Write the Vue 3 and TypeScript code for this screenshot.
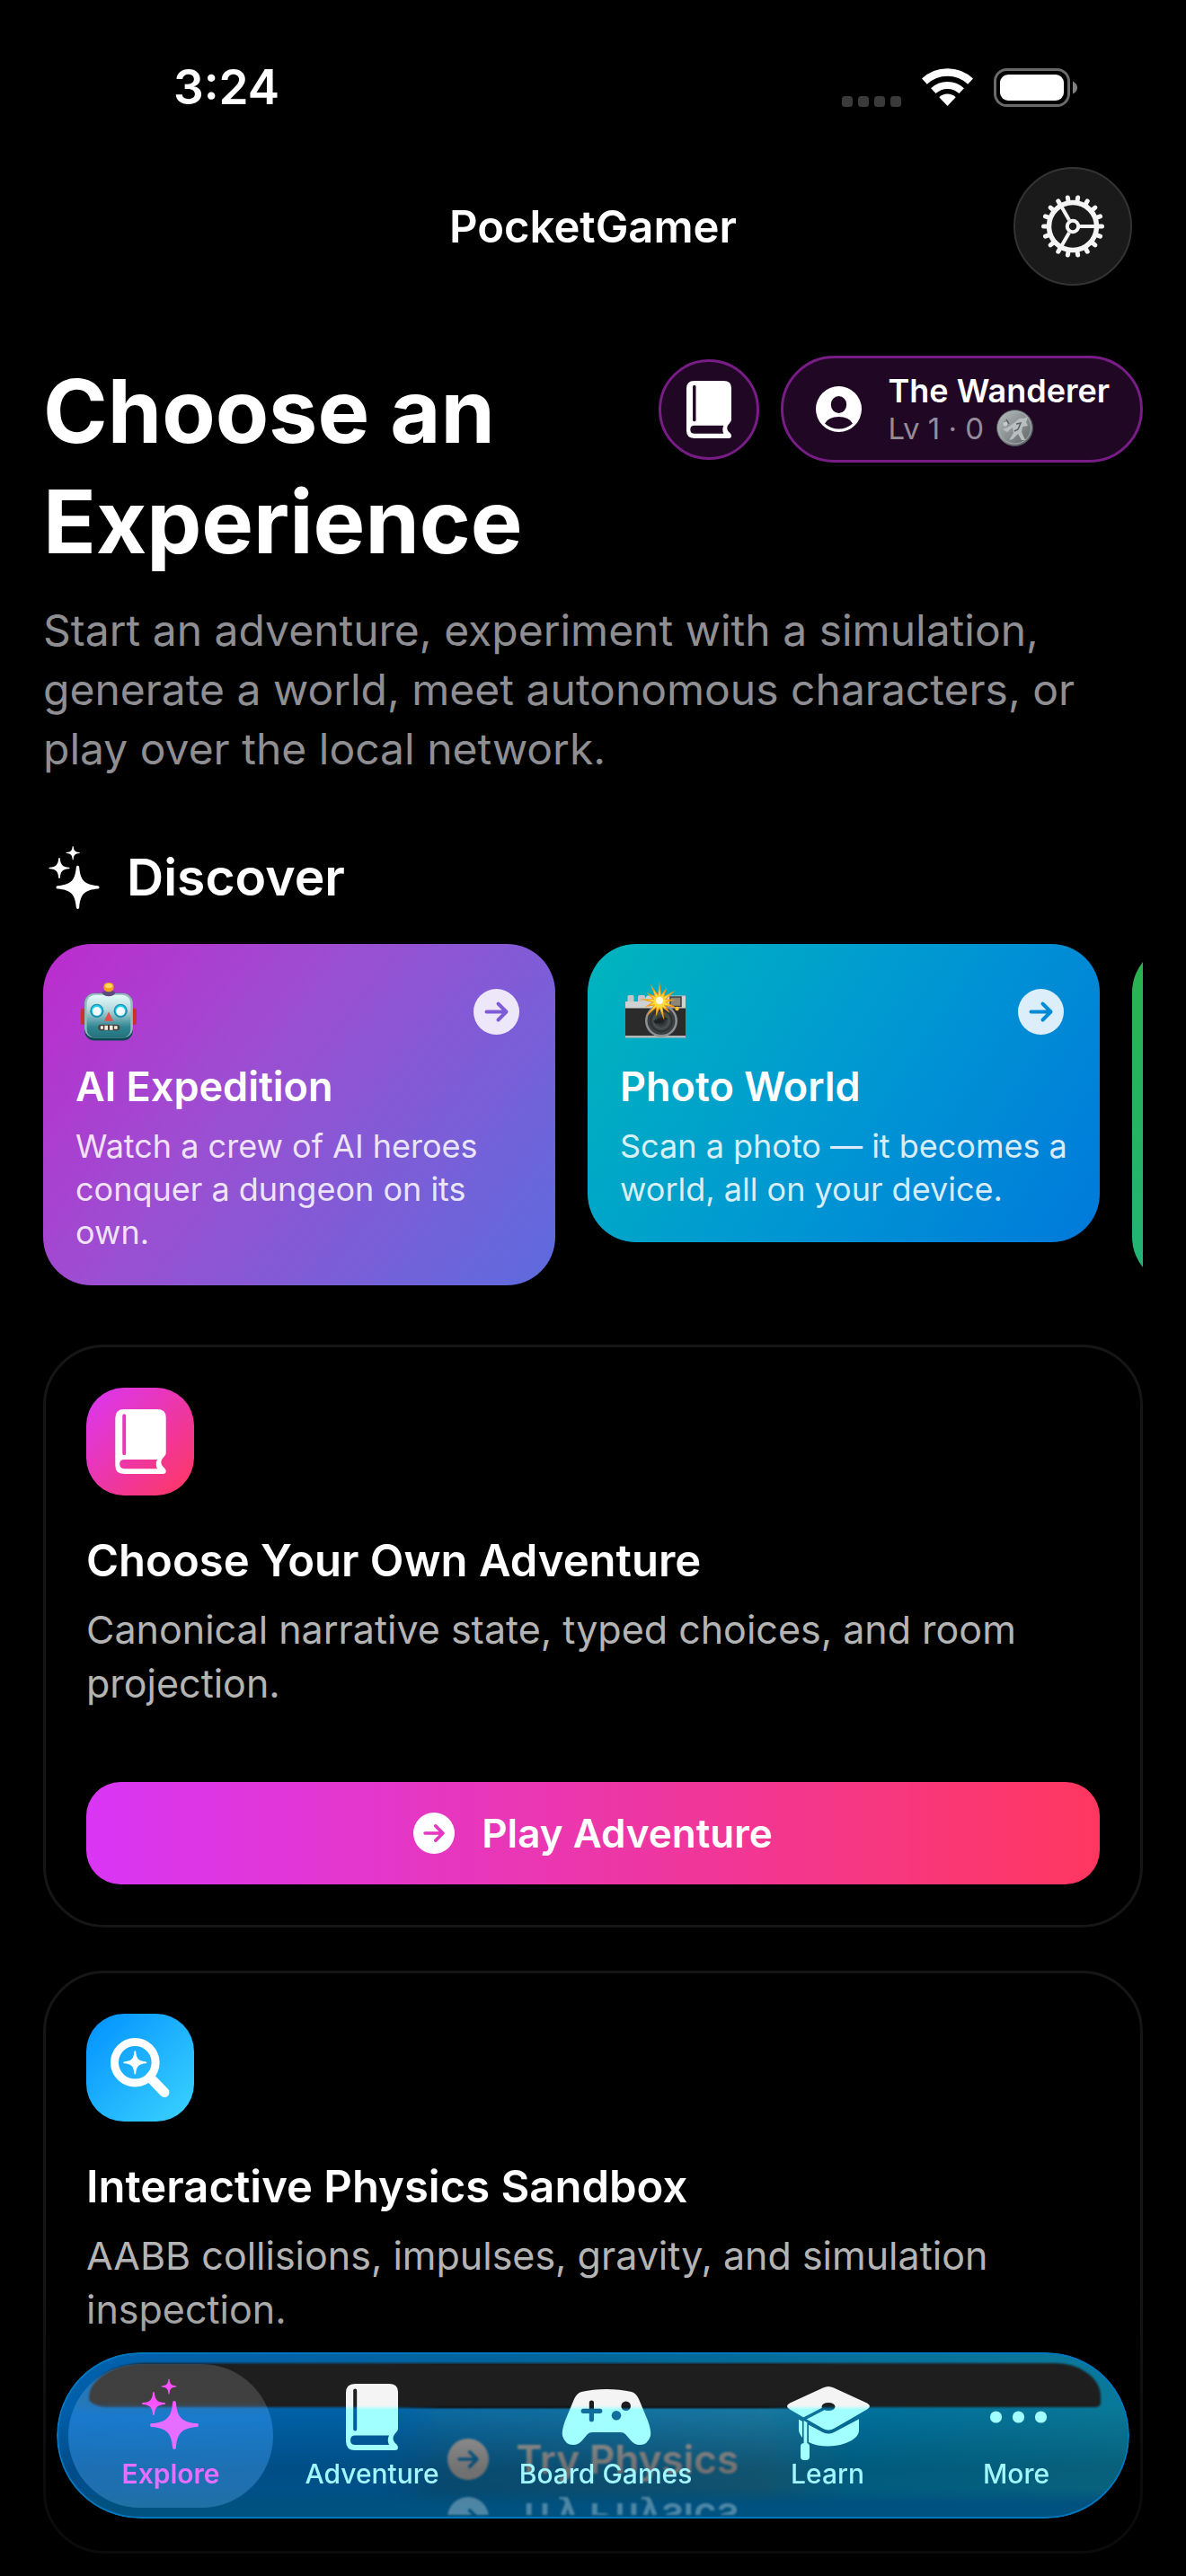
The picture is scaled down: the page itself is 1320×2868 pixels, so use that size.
<script setup lang="ts">
interface Discovery {
  id: string
  title: string
  text: string
  art: string
}

interface Experience {
  id: string
  title: string
  text: string
  action: string
  icon: string
}

interface Tab {
  id: string
  label: string
}

const discoveries: Discovery[] = [
  { id: 'expedition', title: 'AI Expedition', text: 'Watch a crew of AI heroes conquer a dungeon on its own.', art: 'robot' },
  { id: 'photo', title: 'Photo World', text: 'Scan a photo — it becomes a world, all on your device.', art: 'camera' },
]

const experiences: Experience[] = [
  {
    id: 'adventure',
    title: 'Choose Your Own Adventure',
    text: 'Canonical narrative state, typed choices, and room projection.',
    action: 'Play Adventure',
    icon: 'book',
  },
  {
    id: 'physics',
    title: 'Interactive Physics Sandbox',
    text: 'AABB collisions, impulses, gravity, and simulation inspection.',
    action: 'Try Physics',
    icon: 'magnifier',
  },
]

const tabs: Tab[] = [
  { id: 'explore', label: 'Explore' },
  { id: 'adventure', label: 'Adventure' },
  { id: 'games', label: 'Board Games' },
  { id: 'learn', label: 'Learn' },
  { id: 'more', label: 'More' },
]

// Four-pointed star with slightly rounded tips
function star(cx: number, cy: number, r: number): string {
  const t = r * 0.07
  const e = r - t
  const a = r * 0.12
  const b = r * 0.32
  return [
    `M${cx - t} ${cy - e}`,
    `A${t} ${t} 0 0 1 ${cx + t} ${cy - e}`,
    `C${cx + a} ${cy - b} ${cx + b} ${cy - a} ${cx + e} ${cy - t}`,
    `A${t} ${t} 0 0 1 ${cx + e} ${cy + t}`,
    `C${cx + b} ${cy + a} ${cx + a} ${cy + b} ${cx + t} ${cy + e}`,
    `A${t} ${t} 0 0 1 ${cx - t} ${cy + e}`,
    `C${cx - a} ${cy + b} ${cx - b} ${cy + a} ${cx - e} ${cy + t}`,
    `A${t} ${t} 0 0 1 ${cx - e} ${cy - t}`,
    `C${cx - b} ${cy - a} ${cx - a} ${cy - b} ${cx - t} ${cy - e}Z`,
  ].join('')
}

function burst(cx: number, cy: number, outer: number, inner: number, points: number): string {
  const out: string[] = []
  for (let i = 0; i < points * 2; i++) {
    const r = i % 2 ? inner : outer * (i % 4 ? 0.8 : 1)
    const angle = (Math.PI * i) / points - Math.PI / 2
    out.push(`${(cx + r * Math.cos(angle)).toFixed(1)},${(cy + r * Math.sin(angle)).toFixed(1)}`)
  }
  return out.join(' ')
}

const sparkles = star(54, 60, 27) + star(31, 36, 13) + star(48, 17, 8.5)
const teeth = Array.from({ length: 18 }, (_, i) => i * 20)

const bookPath =
  'M10 0H48Q58 0 58 9V50Q58 52 56 54Q52.5 57.5 52.5 60.5Q52.5 64.5 56.5 67.5Q58 69 58 71Q58 74 54.5 74H10Q0 74 0 64V10Q0 0 10 0Z' +
  'M8.2 7.5V50.5A2 2 0 0 0 12.2 50.5V7.5A2 2 0 0 0 8.2 7.5Z' +
  'M10.5 57.5Q5 57.5 5 62.7Q5 68 10.5 68H48Q45.5 62.7 48 57.5Z'

const padPath =
  'M22 3Q35 0 50 0Q65 0 78 3Q83 4.5 86 11L96 35Q100 46 99 52Q96 62 87 62Q81 62 77 57L71 50Q69 48 66 48H34Q31 48 29 50L23 57Q19 62 13 62Q4 62 1 52Q0 46 4 35L14 11Q17 4.5 22 3Z'
</script>

<template>
  <div class="app">
    <svg class="sprite" width="0" height="0" aria-hidden="true">
      <defs>
        <mask id="arrow-mask" maskUnits="userSpaceOnUse" x="0" y="0" width="51" height="51">
          <circle cx="25.5" cy="25.5" r="25.5" fill="#fff" />
          <path d="M14.5 25.5H36M27.5 16.5L36.5 25.5L27.5 34.5" fill="none" stroke="#000" stroke-width="4" stroke-linecap="round" stroke-linejoin="round" />
        </mask>
        <linearGradient id="tab-fill" gradientUnits="userSpaceOnUse" x1="0" y1="38" x2="0" y2="43">
          <stop offset="0" stop-color="#f4f4f4" />
          <stop offset="1" stop-color="#a2ffff" />
        </linearGradient>
        <linearGradient id="tab-active" gradientUnits="userSpaceOnUse" x1="0" y1="34" x2="0" y2="50">
          <stop offset="0" stop-color="#fa50ff" />
          <stop offset="1" stop-color="#e66eff" />
        </linearGradient>
        <linearGradient id="robot-head" x1="0" y1="0" x2="0" y2="1">
          <stop offset="0" stop-color="#e4fafa" />
          <stop offset="0.35" stop-color="#b4d8dc" />
          <stop offset="0.75" stop-color="#2f8592" />
          <stop offset="1" stop-color="#24717e" />
        </linearGradient>
        <linearGradient id="coin-fill" x1="0" y1="0" x2="1" y2="1">
          <stop offset="0" stop-color="#b9bec0" />
          <stop offset="0.5" stop-color="#8b9193" />
          <stop offset="1" stop-color="#565c5f" />
        </linearGradient>
        <radialGradient id="lens-fill">
          <stop offset="0" stop-color="#15181a" />
          <stop offset="0.7" stop-color="#4c5154" />
          <stop offset="1" stop-color="#22272a" />
        </radialGradient>
        <mask id="tab-mask-explore" maskUnits="userSpaceOnUse" x="0" y="0" width="100" height="100">
          <path :d="sparkles" fill="#fff" />
        </mask>
        <mask id="tab-mask-adventure" maskUnits="userSpaceOnUse" x="0" y="0" width="100" height="100">
          <path :d="bookPath" transform="translate(21 14)" fill="#fff" fill-rule="evenodd" />
        </mask>
        <mask id="tab-mask-games" maskUnits="userSpaceOnUse" x="0" y="0" width="104" height="100">
          <g transform="translate(1 20)">
            <path :d="padPath" fill="#fff" />
            <path d="M24.2 24.3H42.8M33.4 15V33.7" stroke="#000" stroke-width="5.2" stroke-linecap="round" />
            <circle cx="71.7" cy="18.7" r="5.3" />
            <circle cx="61" cy="29.3" r="5.3" />
          </g>
        </mask>
        <mask id="tab-mask-learn" maskUnits="userSpaceOnUse" x="0" y="0" width="100" height="100">
          <g transform="translate(5 17)">
            <path d="M40 1.5Q46 -1.5 52 1.5L89 18.5Q95 22 89 25.5L52 47Q46 50.5 40 47L3 25.5Q-3 22 3 18.5Z" fill="#fff" />
            <path d="M42 24L17 37" stroke="#000" stroke-width="3.6" />
            <ellipse cx="46" cy="22.5" rx="7.5" ry="4.5" />
            <path d="M13 36L17 38.5V57Q13 52 13 48Z" fill="#fff" />
            <path d="M24 42.5L40 51Q46 54 52 51L80 36V49Q80 55 72 60Q60 66.5 46 66.5Q33 66.5 24 62Z" fill="#fff" />
            <path d="M4 30L40 49Q46 52 52 49L88 30" fill="none" stroke="#000" stroke-width="3.5" />
            <path d="M18.6 38L22.3 40V64H18.6Z" fill="#fff" />
            <rect x="15" y="63" width="10" height="19" rx="4" fill="#fff" />
          </g>
        </mask>
        <mask id="tab-mask-more" maskUnits="userSpaceOnUse" x="0" y="0" width="100" height="100">
          <circle cx="27.5" cy="51" r="6.6" fill="#fff" />
          <circle cx="52.5" cy="51" r="6.6" fill="#fff" />
          <circle cx="77.5" cy="51" r="6.6" fill="#fff" />
        </mask>
      </defs>
    </svg>

    <div class="status">
      <time class="clock">3:24</time>
      <div class="indicators">
        <svg class="signal" viewBox="0 0 66 12" aria-hidden="true">
          <rect v-for="i in 4" :key="i" :x="(i - 1) * 18" y="0" width="12" height="12" rx="3.5" fill="#3a3a3a" />
        </svg>
        <svg class="wifi" viewBox="0 0 57 42" aria-hidden="true">
          <path d="M2.9 14.6A37.5 37.5 0 0 1 54.1 14.6" fill="none" stroke="#fff" stroke-width="8.5" />
          <path d="M12.8 25.2A23 23 0 0 1 44.2 25.2" fill="none" stroke="#fff" stroke-width="8" />
          <path d="M28.5 42L19.3 32.2A13.5 13.5 0 0 1 37.7 32.2Z" fill="#fff" />
        </svg>
        <svg class="battery" viewBox="0 0 94 43" aria-hidden="true">
          <rect x="1.5" y="1.5" width="82" height="40" rx="13" fill="none" stroke="#6a6a6a" stroke-width="3" />
          <rect x="7" y="7" width="71" height="29" rx="9" fill="#fff" />
          <path d="M88 14.5Q93 17 93 21.5Q93 26 88 28.5Z" fill="#808080" />
        </svg>
      </div>
    </div>

    <header class="topbar">
      <span class="brand">PocketGamer</span>
      <button class="settings" type="button" aria-label="Settings">
        <svg viewBox="-35 -35 70 70" aria-hidden="true">
          <g fill="none" stroke="#f4f4f4">
            <circle r="26.5" stroke-width="5.5" />
            <path v-for="a in teeth" :key="a" d="M28 0H32.5" :transform="`rotate(${a})`" stroke-width="5" stroke-linecap="round" />
            <circle r="6.2" stroke-width="4" />
            <path v-for="a in [0, 120, 240]" :key="a" d="M8 0H25" :transform="`rotate(${a})`" stroke-width="4" />
          </g>
        </svg>
      </button>
    </header>

    <main class="content">
      <section class="hero">
        <h1>Choose an Experience</h1>
        <div class="chips">
          <button class="chip journal" type="button" aria-label="Journal">
            <svg viewBox="0 0 58 74" aria-hidden="true"><path :d="bookPath" fill="#fff" fill-rule="evenodd" /></svg>
          </button>
          <button class="chip profile" type="button">
            <svg class="person" viewBox="0 0 51 51" aria-hidden="true">
              <path
                fill="#fff"
                fill-rule="evenodd"
                d="M25.5 0A25.5 25.5 0 1 1 25.5 51A25.5 25.5 0 1 1 25.5 0ZM25.5 11A8.7 9.5 0 1 0 25.5 30A8.7 9.5 0 1 0 25.5 11ZM10 41.5Q16.5 47.5 25.5 47.5Q34.5 47.5 41 41.5Q37 34 25.5 34Q14 34 10 41.5Z"
              />
            </svg>
            <span class="who">
              <span class="name">The Wanderer</span>
              <span class="level">
                Lv 1 · 0
                <svg class="coin" viewBox="0 0 41 41" aria-hidden="true">
                  <circle cx="20.5" cy="20.5" r="20" fill="url(#coin-fill)" stroke="#4c5154" />
                  <circle cx="20.5" cy="20" r="18" fill="none" stroke="#a9aeb0" stroke-width="1" />
                  <path d="M22 13Q26 8 30 10L35 8L33 14L35 18L29 19L28 25L32 34H28L24 27L18 33L14 34L19 26L18 20L12 25L7 22L14 19Z" fill="#b9bebf" />
                  <path d="M22 16L27 15L24 22L20 24M9 13L12 18M11 11L14 16" fill="none" stroke="#5c6265" stroke-width="1.5" />
                  <circle cx="10" cy="16" r="2.5" fill="#c7cbcc" />
                </svg>
              </span>
            </span>
          </button>
        </div>
      </section>
      <p class="intro">
        Start an adventure, experiment with a simulation, generate a world, meet autonomous characters, or play over the local network.
      </p>

      <h2 class="section-title">
        <svg viewBox="18 8.5 63 78.5" aria-hidden="true"><path :d="sparkles" fill="#fff" /></svg>
        Discover
      </h2>

      <div class="carousel">
        <a v-for="item in discoveries" :key="item.id" href="#" class="tile" :class="item.id">
          <span class="tile-head">
            <svg v-if="item.art === 'robot'" class="robot" viewBox="0 0 61 64" aria-hidden="true">
              <rect x="0" y="28" width="7" height="18" rx="2.5" fill="#c8322f" />
              <rect x="54" y="28" width="7" height="18" rx="2.5" fill="#c8322f" />
              <rect x="4" y="11.5" width="53" height="52" rx="11" fill="#0b4854" />
              <rect x="4" y="11.5" width="53" height="49" rx="11" fill="#95bcbc" />
              <rect x="6.5" y="13.5" width="48" height="47" rx="9" fill="url(#robot-head)" />
              <path d="M23 11Q24 8.5 30.5 8.5Q37 8.5 38 11Q36 15 30.5 15Q25 15 23 11Z" fill="#5e4a80" />
              <rect x="25" y="0" width="11" height="10" rx="4.5" fill="#f7a21b" />
              <ellipse cx="30.5" cy="3.5" rx="4" ry="2.5" fill="#ffd95a" />
              <circle cx="17.5" cy="31" r="7.5" fill="#1c8fae" />
              <circle cx="43.5" cy="31" r="7.5" fill="#1c8fae" />
              <circle cx="17.5" cy="30.5" r="6" fill="#22d0f2" />
              <circle cx="43.5" cy="30.5" r="6" fill="#22d0f2" />
              <circle cx="17.5" cy="31.5" r="4.8" fill="#f2fbfd" />
              <circle cx="43.5" cy="31.5" r="4.8" fill="#f2fbfd" />
              <path d="M30.5 32L35.5 42H25.5Z" fill="#e0504a" />
              <rect x="19" y="46" width="23.5" height="6.5" rx="3" fill="#4a3f3a" />
              <path d="M21.5 47.5H24.5V51H21.5ZM26 47H29.5V52H26ZM31.5 47H35V52H31.5ZM36.5 47.5H40V51H36.5Z" fill="#f4efe2" />
            </svg>
            <svg v-else class="camera" viewBox="0 0 67 60" aria-hidden="true">
              <rect x="2.5" y="12" width="7" height="8" rx="1.5" fill="#c4c6c7" />
              <rect x="14" y="12" width="8" height="8" rx="1.5" fill="#c4c6c7" />
              <path d="M0 19H20L24 12.5H67V28H0Z" fill="#cfd1d2" />
              <rect x="0" y="26.5" width="67" height="31" fill="#2b2b2c" />
              <rect x="0" y="57" width="67" height="2.5" fill="#b5b5b5" />
              <rect x="50" y="14" width="12" height="10.5" fill="#8d8478" stroke="#3b3b3b" stroke-width="1.5" />
              <circle cx="57.5" cy="27" r="2.2" fill="#ffc533" />
              <circle cx="40" cy="40.5" r="18" fill="#8c9092" />
              <circle cx="40" cy="40.5" r="15.5" fill="#3a3f42" />
              <circle cx="40" cy="40.5" r="12.5" fill="url(#lens-fill)" />
              <path d="M31 41Q38 36 48 38Q42 42 34 44Z" fill="#1d2123" />
              <polygon :points="burst(38, 19, 22, 8, 13)" fill="#f89a16" />
              <polygon :points="burst(38, 19, 14, 6, 13)" fill="#ffdc3c" />
              <circle cx="38" cy="18" r="4" fill="#fffbe0" />
            </svg>
            <svg class="go" viewBox="0 0 51 51" aria-hidden="true"><rect width="51" height="51" fill="#fff" mask="url(#arrow-mask)" /></svg>
          </span>
          <span class="tile-title">{{ item.title }}</span>
          <span class="tile-text">{{ item.text }}</span>
        </a>
        <a href="#" class="tile next" aria-label="Next experience"></a>
      </div>

      <section class="stack">
        <article v-for="item in experiences" :key="item.id" class="card" :class="item.id">
          <span class="badge">
            <svg v-if="item.icon === 'book'" class="badge-book" viewBox="0 0 58 74" aria-hidden="true">
              <path :d="bookPath" fill="#fff" fill-rule="evenodd" />
            </svg>
            <svg v-else class="badge-lens" viewBox="0 0 66 66" aria-hidden="true">
              <circle cx="27.3" cy="27.3" r="22.8" fill="none" stroke="#fff" stroke-width="9" />
              <path d="M44 44L60 60.5" stroke="#fff" stroke-width="11" stroke-linecap="round" />
              <path :d="star(27.3, 27.3, 13)" fill="#fff" />
            </svg>
          </span>
          <h3>{{ item.title }}</h3>
          <p>{{ item.text }}</p>
          <button class="action" type="button">
            <svg viewBox="0 0 51 51" aria-hidden="true"><rect width="51" height="51" fill="#fff" mask="url(#arrow-mask)" /></svg>
            {{ item.action }}
          </button>
        </article>
      </section>
    </main>

    <div class="scrim" aria-hidden="true"></div>

    <nav class="tabbar" aria-label="Main">
      <span class="glass" aria-hidden="true"></span>
      <span class="shade" aria-hidden="true"></span>
      <span class="mirror" aria-hidden="true">
        <svg viewBox="0 0 51 51"><rect width="51" height="51" fill="#fff" mask="url(#arrow-mask)" /></svg>
        Try Physics
      </span>
      <a v-for="tab in tabs" :key="tab.id" href="#" class="tab" :class="{ active: tab.id === 'explore' }">
        <svg viewBox="0 0 100 100" aria-hidden="true">
          <rect width="104" height="100" :fill="tab.id === 'explore' ? 'url(#tab-active)' : 'url(#tab-fill)'" :mask="`url(#tab-mask-${tab.id})`" />
        </svg>
        <span>{{ tab.label }}</span>
      </a>
    </nav>
  </div>
</template>

<style>
body {
  margin: 0;
  background: #000;
}
</style>

<style scoped>
.app {
  min-height: 100vh;
  box-sizing: border-box;
  padding-bottom: 24px;
  overflow: hidden;
  background: #000;
  color: #fff;
  font-family: Inter, "Liberation Sans", sans-serif;
}

.app * {
  box-sizing: border-box;
}

.app svg {
  display: block;
  flex: none;
  overflow: visible;
}

.sprite {
  position: absolute;
}

button {
  border: 0;
  margin: 0;
  padding: 0;
  color: inherit;
  font: inherit;
  cursor: pointer;
}

a {
  color: inherit;
  text-decoration: none;
}

/* Status bar */
.status {
  display: flex;
  align-items: center;
  justify-content: space-between;
  height: 186px;
  padding: 8px 120px 0 193px;
}

.clock {
  font-size: 53px;
  font-weight: 600;
}

.indicators {
  display: flex;
  align-items: center;
  gap: 23px;
}

.signal {
  width: 66px;
  height: 12px;
  align-self: flex-end;
}

.wifi {
  width: 57px;
  height: 42px;
}

.battery {
  width: 94px;
  height: 43px;
}

/* Title bar */
.topbar {
  display: grid;
  grid-template-columns: 1fr auto 1fr;
  align-items: center;
  padding: 0 60px;
}

.brand {
  grid-column: 2;
  font-size: 49px;
  font-weight: 600;
}

.settings {
  justify-self: end;
  display: grid;
  place-items: center;
  width: 132px;
  height: 132px;
  border: 2px solid #333;
  border-radius: 50%;
  background: #1a1a1a;
}

.settings svg {
  width: 70px;
  height: 70px;
}

.content {
  padding: 78px 48px 0;
}

/* Hero */
.hero {
  display: flex;
  justify-content: space-between;
  align-items: flex-start;
}

h1 {
  flex: 0 1 600px;
  margin: 0;
  font-size: 97px;
  line-height: 123px;
  font-weight: 700;
}

.chips {
  display: flex;
  align-items: center;
  gap: 24px;
}

.chip {
  display: flex;
  align-items: center;
  border: 3px solid #781c86;
  background: #200824;
}

.journal {
  justify-content: center;
  width: 112px;
  height: 112px;
  border-radius: 50%;
}

.journal svg {
  width: 50px;
  height: 64px;
}

.profile {
  gap: 30px;
  height: 119px;
  padding: 0 34px 0 36px;
  border-radius: 60px;
  text-align: left;
}

.person {
  width: 51px;
  height: 51px;
}

.who {
  display: flex;
  flex-direction: column;
}

.name {
  font-size: 36px;
  line-height: 42px;
  font-weight: 600;
  white-space: nowrap;
}

.level {
  display: flex;
  align-items: center;
  gap: 14px;
  font-size: 33px;
  line-height: 40px;
  color: #968b9b;
  white-space: nowrap;
}

.coin {
  width: 41px;
  height: 41px;
}

.intro {
  margin: 27px 0 0;
  font-size: 48px;
  line-height: 66px;
  color: #8e8e93;
}

/* Discover carousel */
.section-title {
  display: flex;
  align-items: center;
  gap: 30px;
  margin: 75px 0 39px;
  padding-left: 6px;
  font-size: 57px;
  line-height: 70px;
  font-weight: 600;
}

.section-title svg {
  width: 57px;
  height: 70px;
}

.carousel {
  display: flex;
  align-items: flex-start;
  gap: 36px;
  overflow: hidden;
}

.tile {
  flex: 0 0 570px;
  display: flex;
  flex-direction: column;
  padding: 36px;
  border-radius: 54px;
}

.expedition {
  background: linear-gradient(127deg, #bd2bce, #9b4fd2 40%, #5c6cdd);
}

.photo {
  background: linear-gradient(122deg, #00b5bc, #0098d2 50%, #0079db);
}

.next {
  align-self: stretch;
  background: linear-gradient(#2bb34c, #20b478);
}

.tile-head {
  display: flex;
  align-items: center;
  justify-content: space-between;
  height: 78px;
  margin-bottom: 18px;
  padding: 0 4px 0 6px;
}

.robot {
  width: 62px;
  height: 65px;
}

.camera {
  width: 67px;
  height: 60px;
}

.go {
  width: 51px;
  height: 51px;
  opacity: 0.86;
}

.tile-title {
  margin-bottom: 15px;
  font-size: 45px;
  line-height: 54px;
  font-weight: 600;
}

.tile-text {
  margin-bottom: -1px;
  font-size: 36px;
  line-height: 48px;
  color: rgba(255, 255, 255, 0.85);
}

/* Experience cards */
.stack {
  display: flex;
  flex-direction: column;
  gap: 48px;
  margin-top: 66px;
}

.card {
  padding: 45px;
  border: 3px solid #161616;
  border-radius: 68px;
}

.badge {
  display: grid;
  place-items: center;
  width: 120px;
  height: 120px;
  border-radius: 42px;
}

.adventure .badge {
  background: linear-gradient(135deg, #d936f5, #ff375f);
}

.physics .badge {
  background: linear-gradient(135deg, #0091ff, #3cd3fe);
}

.badge-book {
  width: 57px;
  height: 72px;
}

.badge-lens {
  width: 66px;
  height: 66px;
}

h3 {
  margin: 43px 0 16px;
  font-size: 49px;
  line-height: 60px;
  font-weight: 600;
}

.card p {
  margin: 0 0 80px;
  font-size: 43px;
  line-height: 60px;
  color: #b4b4b4;
}

.action {
  display: flex;
  align-items: center;
  justify-content: center;
  gap: 30px;
  width: 100%;
  height: 114px;
  border-radius: 38px;
  font-size: 44px;
  font-weight: 600;
}

.adventure .action {
  background: linear-gradient(90deg, #d936f5, #ff375f);
}

.physics .action {
  background: linear-gradient(90deg, #0091ff, #3cd3fe);
}

.action svg {
  width: 46px;
  height: 46px;
}

/* Fade under the floating tab bar */
.scrim {
  position: fixed;
  right: 0;
  bottom: 0;
  left: 0;
  height: 320px;
  background: linear-gradient(transparent, rgba(0, 0, 0, 0.36) 42%, rgba(0, 0, 0, 0.5) 78%);
  pointer-events: none;
}

/* Floating tab bar */
.tabbar {
  position: fixed;
  right: 63px;
  bottom: 64px;
  left: 63px;
  display: grid;
  grid-template-columns: 228fr 220fr 300fr 194fr 226fr;
  height: 185px;
  padding: 13px 13px 12px;
  border-radius: 93px;
  overflow: hidden;
  backdrop-filter: blur(1px);
}

.glass,
.shade {
  position: absolute;
  inset: 0;
  border-radius: inherit;
}

.glass {
  background:
    linear-gradient(transparent 62px, rgba(0, 0, 0, 0.2) 130px, rgba(0, 0, 0, 0.14)),
    linear-gradient(90deg, #0060b0, #006699 50%, #0c7a9a) top / 100% 13px no-repeat,
    linear-gradient(transparent, rgba(0, 96, 150, 1) 18px) bottom / 100% 34px no-repeat,
    linear-gradient(90deg, #005fab, #0062a6 30%, rgba(0, 98, 166, 0) 36%, rgba(0, 110, 160, 0) 66%, #00709c 74%, #0a7898);
  box-shadow: inset 0 0 0 2px #0078c0;
}

.shade {
  inset: 12px 32px auto 36px;
  height: 49px;
  border-radius: 74px 60px 6px 24px / 46px 44px 6px 12px;
  background: #1e1e1e;
  filter: blur(1px);
}

/* Reflection of the button label in the lower edge of the glass */
.mirror {
  position: absolute;
  right: 0;
  bottom: 4px;
  left: 0;
  display: flex;
  align-items: flex-end;
  justify-content: center;
  gap: 30px;
  height: 20px;
  overflow: hidden;
  transform: scaleY(-1);
  font-size: 44px;
  line-height: 46px;
  font-weight: 600;
  opacity: 0.3;
  filter: blur(1px);
}

.mirror svg {
  width: 46px;
  height: 46px;
}

.tab {
  position: relative;
  display: flex;
  flex-direction: column;
  align-items: center;
  padding-top: 8px;
  border-radius: 80px;
  font-size: 30px;
  line-height: 28px;
  font-weight: 500;
  color: #a2f6ff;
  white-space: nowrap;
}

.tab svg {
  width: 100px;
  height: 100px;
}

.tab.active {
  background: linear-gradient(rgba(255, 255, 255, 0.15) 42px, rgba(50, 150, 245, 0.5) 58px, rgba(70, 150, 210, 0.45));
  color: #e66eff;
  font-weight: 600;
}
</style>
